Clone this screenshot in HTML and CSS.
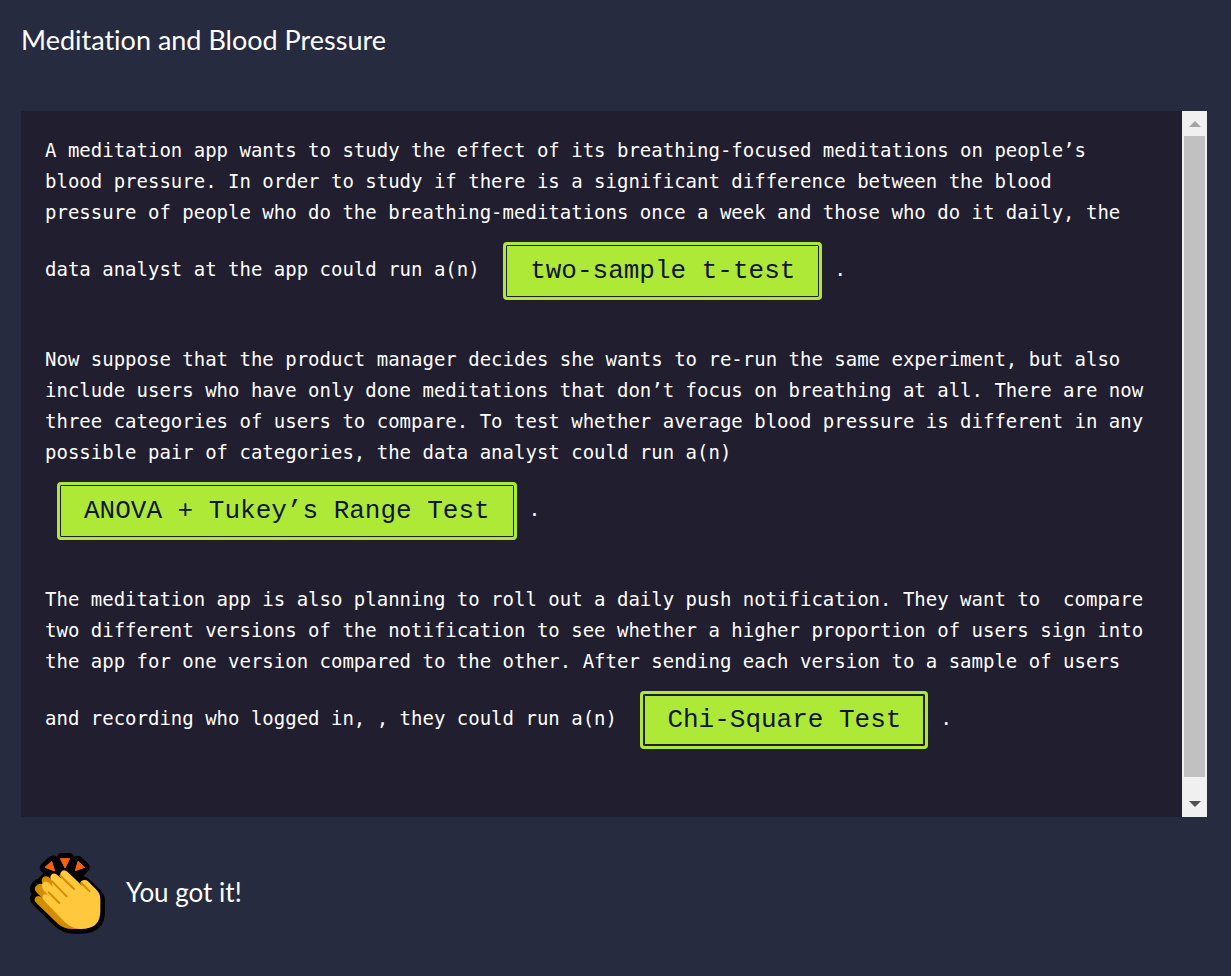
FILE: index.html
```html
<!DOCTYPE html>
<html lang="en">
<head>
<meta charset="utf-8">
<meta name="viewport" content="width=device-width, initial-scale=1">
<title>Meditation and Blood Pressure</title>
<link rel="stylesheet" href="styles.css">
</head>
<body>
<main class="page">
  <h1 class="title">Meditation and Blood Pressure</h1>
  <section class="panel">
    <div class="passage">
      <p>A meditation app wants to study the effect of its breathing-focused meditations on people’s blood pressure. In order to study if there is a significant difference between the blood pressure of people who do the breathing-meditations once a week and those who do it daily, the data analyst at the app could run a(n) <button class="answer" type="button">two-sample t-test</button>.</p>
      <p>Now suppose that the product manager decides she wants to re-run the same experiment, but also include users who have only done meditations that don’t focus on breathing at all. There are now three categories of users to compare. To test whether average blood pressure is different in any possible pair of categories, the data analyst could run a(n) <button class="answer" type="button">ANOVA + Tukey’s Range Test</button>.</p>
      <p>The meditation app is also planning to roll out a daily push notification. They want to&nbsp; compare two different versions of the notification to see whether a higher proportion of users sign into the app for one version compared to the other. After sending each version to a sample of users and recording who logged in, , they could run a(n) <button class="answer answer-current" type="button">Chi-Square Test</button>.</p>
    </div>
    <div class="scrollbar">
      <button class="arrow arrow-up" type="button" aria-label="Scroll up"><svg width="12" height="6" viewBox="0 0 12 6"><path d="M0 6L6 0L12 6Z"/></svg></button>
      <div class="thumb"></div>
      <button class="arrow arrow-down" type="button" aria-label="Scroll down"><svg width="12" height="6" viewBox="0 0 12 6"><path d="M0 0H12L6 6Z"/></svg></button>
    </div>
  </section>
  <footer class="result">
    <svg class="clap" width="90" height="90" viewBox="0 0 270 270" aria-hidden="true">
      <path d="M112 18Q114 6 125 6H148Q159 6 162 18Q171 11 181 16L204 37Q215 50 204 61L190 75Q206 80 216 92L241 117Q255 130 255 147V181Q255 248 183 248H160Q129 248 103 224L36 158Q29 151 30 141Q32 133 35 130Q25 113 34 100Q43 85 54 84L70 67Q55 57 61 43L82 22Q98 8 112 18Z" fill="#000"/>
      <g fill="#f7630c" stroke="#f7630c" stroke-width="3" stroke-linejoin="round">
        <path d="M75 49L95 31L104 60Z"/>
        <path d="M121 23H149L135 51Z"/>
        <path d="M174 31L194 49L166 59Z"/>
      </g>
      <path d="M48 137Q39 146 49 156L115 220Q132 234 157 234H185L100 90L85 77Q75 73 68 80Q63 85 66 94L68 99L60 98Q42 103 45 117Q47 123 66 140Q57 132 48 137Z" fill="#d48c00"/>
      <path d="M126 60Q133 54 143 63L187 105L182 98Q180 91 189 88Q197 85 204 91L230 117Q241 128 241 144V181Q241 234 183 234Q157 234 135 214L73 150Q64 139 70 132Q77 126 86 134L71 118Q62 106 68 97Q77 86 88 97L98 107L94 87Q88 78 94 71Q103 63 113 73L123 82L121 72Q119 66 126 60Z" fill="#ffc83d"/>
      <g fill="none" stroke="#d48c00" stroke-width="6" stroke-linecap="round">
        <path d="M86 124L118 156M96 91L140 136M121 74L162 114M184 96L209 121"/>
      </g>
    </svg>
    <p class="message">You got it!</p>
  </footer>
</main>
</body>
</html>
```
FILE: styles.css
```css
* { box-sizing: border-box; }

body {
  margin: 0;
  background: #262b40;
  color: #fff;
  font-family: Lato, "Liberation Sans", sans-serif;
  font-variant-ligatures: none;
}

.page { padding: 24px 24px 32px 21px; }

.title {
  margin: 0 0 55px;
  font-size: 27px;
  font-weight: 400;
  line-height: 32px;
}

.panel {
  display: flex;
  background: #211e2f;
}

.passage {
  flex: 1;
  padding: 24px 32px 56px 24px;
  font: 19px/31px "DejaVu Sans Mono", monospace;
}

.passage p { margin: 0 0 32px; }
.passage p:last-child { margin-bottom: 0; }

.answer {
  height: 58px;
  margin: 14px 12px 12px;
  padding: 0 24px;
  border: 3px solid #aee938;
  border-radius: 4px;
  background: #aee938;
  box-shadow: inset 0 0 0 1px #211e2f;
  color: #10162f;
  font: 26px/32px "Liberation Mono", monospace;
  vertical-align: middle;
}

.answer-current { box-shadow: inset 0 0 0 2px #211e2f; }

.scrollbar {
  display: flex;
  flex-direction: column;
  width: 25px;
  background: #f0f0f0;
}

.arrow {
  display: grid;
  place-items: center;
  height: 25px;
  padding: 0;
  border: 0;
  background: none;
}

.arrow-up { fill: #a3a3a3; }
.arrow-down { height: 40px; padding-top: 13px; fill: #505050; }

.thumb {
  flex: 1;
  margin: 0 2px;
  background: #c1c1c1;
}

.result {
  display: flex;
  align-items: center;
  gap: 16px;
  padding-top: 34px;
}

.clap { margin-left: -1px; }

.message {
  margin: 0;
  padding-bottom: 8px;
  font-size: 26px;
  line-height: 32px;
}
```
